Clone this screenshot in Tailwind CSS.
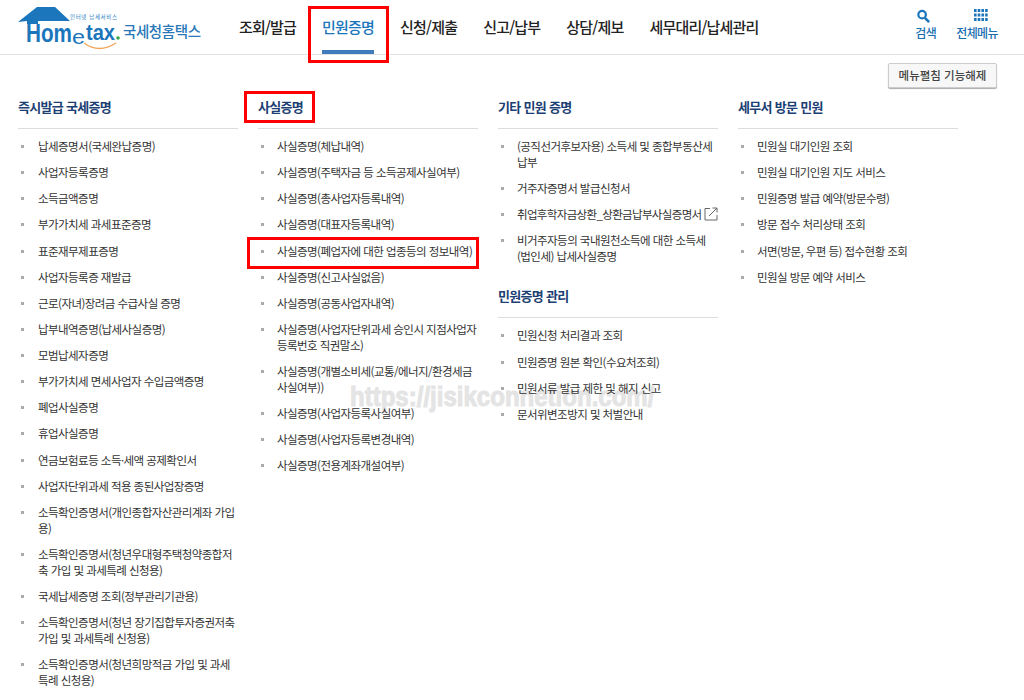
<!doctype html>
<html lang="ko">
<head>
<meta charset="UTF-8" />
<meta name="viewport" content="width=device-width, initial-scale=1.0" />
<script src="https://cdn.jsdelivr.net/npm/@tailwindcss/browser@4"></script>
</head>
<body class="relative h-[700px] overflow-hidden bg-white text-[#333] font-['Noto_Sans_CJK_KR','Noto_Sans',sans-serif]">

<!-- watermark behind the page -->
<div class="absolute -z-10 left-[350px] top-[381px] origin-left scale-x-[0.89] whitespace-nowrap text-[27px] font-bold leading-[32px] text-[#e4e4e4] [-webkit-text-stroke:1px_#e4e4e4] font-['Liberation_Sans',sans-serif]">https://jisikconnetion.com/</div>

<!-- HEADER -->
<header class="flex items-start h-[55px] border-b border-[#e2e2e2]">
    <a href="#" class="block w-[239px] shrink-0">
        <svg width="205" height="54" viewBox="0 0 205 54">
            <path d="M18 22 L37 7 H55 L70 21 H38 V24 H27 V21 Z" fill="#1b76bc"/>
            <text x="70" y="19" font-size="5.5" textLength="47" fill="#2a7fc0">인터넷 납세서비스</text>
            <text x="26" y="42" font-family="Liberation Sans" font-weight="700" font-size="25" textLength="46" lengthAdjust="spacingAndGlyphs" fill="#1b76bc">Hom</text>
            <text x="72" y="44" font-family="Liberation Sans" font-size="20" textLength="13" lengthAdjust="spacingAndGlyphs" fill="#1b76bc">e</text>
            <text x="86" y="40" font-family="Liberation Sans" font-weight="700" font-size="22" textLength="29" lengthAdjust="spacingAndGlyphs" fill="#1b76bc">tax</text>
            <circle cx="118" cy="38" r="1.8" fill="#3aa845"/>
            <path d="M84 43 Q99 54 116 43" stroke="#f2a65a" stroke-width="1.3" fill="none"/>
            <text x="123" y="37" font-size="14.5" font-weight="500" textLength="78" fill="#2878b8">국세청홈택스</text>
        </svg>
    </a>
    <nav class="flex gap-[26px] text-[15px] font-medium tracking-[-0.8px] text-[#222] leading-[54px]">
        <a href="#">조회/발급</a>
        <a href="#" class="relative h-[54px] text-[#1b76bc]">민원증명<span class="absolute left-0 right-0 bottom-0 h-[4px] bg-[#3f7cbc]"></span></a>
        <a href="#">신청/제출</a>
        <a href="#">신고/납부</a>
        <a href="#">상담/제보</a>
        <a href="#">세무대리/납세관리</a>
    </nav>
    <div class="ml-auto flex gap-[20px] pr-[26px] pt-[9px] text-[12px] font-medium tracking-[-0.6px] text-[#1a6fb0] text-center">
        <a href="#" class="flex flex-col items-center">
            <svg width="15" height="15" viewBox="0 0 16 16" class="mr-[5px]"><circle cx="6.5" cy="6" r="4" stroke="#1b76bc" stroke-width="2.4" fill="none"/><path d="M9.5 9.5 L14 14" stroke="#1b76bc" stroke-width="2.8"/></svg>
            <span class="leading-[18px]">검색</span>
        </a>
        <a href="#" class="flex flex-col items-center">
            <svg width="14" height="15" viewBox="0 0 14 15" class="ml-[8px]" fill="#1b76bc">
                <rect x="0" y="0" width="2.6" height="3"/><rect x="3.7" y="0" width="2.6" height="3"/><rect x="7.4" y="0" width="2.6" height="3"/><rect x="11.1" y="0" width="2.6" height="3"/>
                <rect x="0" y="4.5" width="2.6" height="3"/><rect x="3.7" y="4.5" width="2.6" height="3"/><rect x="7.4" y="4.5" width="2.6" height="3"/><rect x="11.1" y="4.5" width="2.6" height="3"/>
                <rect x="0" y="9" width="2.6" height="3"/><rect x="3.7" y="9" width="2.6" height="3"/><rect x="7.4" y="9" width="2.6" height="3"/><rect x="11.1" y="9" width="2.6" height="3"/>
            </svg>
            <span class="leading-[18px]">전체메뉴</span>
        </a>
    </div>
</header>

<div class="flex justify-end pr-[27px] pt-[8px] h-[36px]">
    <button class="w-[109px] h-[25px] bg-[#f7f7f7] border border-[#ccc] rounded-[2px] shadow-[0_1px_1px_#aaa] text-[11.5px] font-medium text-[#444]">메뉴펼침 기능해제</button>
</div>

<!-- MENU COLUMNS -->
<main class="flex gap-[20px] pl-[18px] pt-[6px] text-[11.5px] leading-[16px] tracking-[-0.55px]">

    <section class="w-[220px]">
        <h2 class="h-[32px] border-b border-[#ddd] text-[13px] font-bold leading-[20px] text-[#1c4073] tracking-[-0.7px]">즉시발급 국세증명</h2>
        <ul class="pt-[9px] [&>li]:relative [&>li]:mb-[10.13px] [&>li]:pl-[20px] [&>li]:before:absolute [&>li]:before:left-[3px] [&>li]:before:top-[7px] [&>li]:before:h-[3px] [&>li]:before:w-[3px] [&>li]:before:bg-[#aaa] [&>li]:before:content-['']">
            <li>납세증명서(국세완납증명)</li>
            <li>사업자등록증명</li>
            <li>소득금액증명</li>
            <li>부가가치세 과세표준증명</li>
            <li>표준재무제표증명</li>
            <li>사업자등록증 재발급</li>
            <li>근로(자녀)장려금 수급사실 증명</li>
            <li>납부내역증명(납세사실증명)</li>
            <li>모범납세자증명</li>
            <li>부가가치세 면세사업자 수입금액증명</li>
            <li>폐업사실증명</li>
            <li>휴업사실증명</li>
            <li>연금보험료등 소득·세액 공제확인서</li>
            <li>사업자단위과세 적용 종된사업장증명</li>
            <li>소득확인증명서(개인종합자산관리계좌 가입용)</li>
            <li>소득확인증명서(청년우대형주택청약종합저축 가입 및 과세특례 신청용)</li>
            <li>국세납세증명 조회(정부관리기관용)</li>
            <li>소득확인증명서(청년 장기집합투자증권저축 가입 및 과세특례 신청용)</li>
            <li>소득확인증명서(청년희망적금 가입 및 과세특례 신청용)</li>
        </ul>
    </section>

    <section class="w-[220px]">
        <h2 class="h-[32px] border-b border-[#ddd] text-[13px] font-bold leading-[20px] text-[#1c4073] tracking-[-0.7px]">사실증명</h2>
        <ul class="pt-[9px] [&>li]:relative [&>li]:mb-[10.13px] [&>li]:pl-[19px] [&>li]:before:absolute [&>li]:before:left-[3px] [&>li]:before:top-[7px] [&>li]:before:h-[3px] [&>li]:before:w-[3px] [&>li]:before:bg-[#aaa] [&>li]:before:content-['']">
            <li>사실증명(체납내역)</li>
            <li>사실증명(주택자금 등 소득공제사실여부)</li>
            <li>사실증명(총사업자등록내역)</li>
            <li>사실증명(대표자등록내역)</li>
            <li class="whitespace-nowrap">사실증명(폐업자에 대한 업종등의 정보내역)</li>
            <li>사실증명(신고사실없음)</li>
            <li>사실증명(공동사업자내역)</li>
            <li>사실증명(사업자단위과세 승인시 지점사업자 등록번호 직권말소)</li>
            <li>사실증명(개별소비세(교통/에너지/환경세금 사실여부))</li>
            <li>사실증명(사업자등록사실여부)</li>
            <li>사실증명(사업자등록변경내역)</li>
            <li>사실증명(전용계좌개설여부)</li>
        </ul>
    </section>

    <section class="w-[220px]">
        <h2 class="h-[32px] border-b border-[#ddd] text-[13px] font-bold leading-[20px] text-[#1c4073] tracking-[-0.7px]">기타 민원 증명</h2>
        <ul class="pt-[9px] [&>li]:relative [&>li]:mb-[10.13px] [&>li]:pl-[19px] [&>li]:before:absolute [&>li]:before:left-[3px] [&>li]:before:top-[7px] [&>li]:before:h-[3px] [&>li]:before:w-[3px] [&>li]:before:bg-[#aaa] [&>li]:before:content-['']">
            <li>(공직선거후보자용) 소득세 및 종합부동산세 납부</li>
            <li>거주자증명서 발급신청서</li>
            <li class="whitespace-nowrap tracking-[-0.65px]">취업후학자금상환_상환금납부사실증명서
                <svg width="14" height="14" viewBox="0 0 14 14" class="inline-block align-[-2px]" fill="none" stroke="#666" stroke-width="1"><path d="M6 1.5 H1 V13 H13 V8"/><path d="M5 9 L13 1 M8.5 1 H13 V5.5"/></svg>
            </li>
            <li>비거주자등의 국내원천소득에 대한 소득세 (법인세) 납세사실증명</li>
        </ul>
        <h2 class="mt-[22px] h-[32px] border-b border-[#ddd] text-[13px] font-bold leading-[20px] text-[#1c4073] tracking-[-0.7px]">민원증명 관리</h2>
        <ul class="pt-[9px] [&>li]:relative [&>li]:mb-[10.13px] [&>li]:pl-[19px] [&>li]:before:absolute [&>li]:before:left-[3px] [&>li]:before:top-[7px] [&>li]:before:h-[3px] [&>li]:before:w-[3px] [&>li]:before:bg-[#aaa] [&>li]:before:content-['']">
            <li>민원신청 처리결과 조회</li>
            <li>민원증명 원본 확인(수요처조회)</li>
            <li>민원서류 발급 제한 및 해지 신고</li>
            <li>문서위변조방지 및 처벌안내</li>
        </ul>
    </section>

    <section class="w-[220px]">
        <h2 class="h-[32px] border-b border-[#ddd] text-[13px] font-bold leading-[20px] text-[#1c4073] tracking-[-0.7px]">세무서 방문 민원</h2>
        <ul class="pt-[9px] [&>li]:relative [&>li]:mb-[10.13px] [&>li]:pl-[19px] [&>li]:before:absolute [&>li]:before:left-[3px] [&>li]:before:top-[7px] [&>li]:before:h-[3px] [&>li]:before:w-[3px] [&>li]:before:bg-[#aaa] [&>li]:before:content-['']">
            <li>민원실 대기인원 조회</li>
            <li>민원실 대기인원 지도 서비스</li>
            <li>민원증명 발급 예약(방문수령)</li>
            <li>방문 접수 처리상태 조회</li>
            <li>서면(방문, 우편 등) 접수현황 조회</li>
            <li>민원실 방문 예약 서비스</li>
        </ul>
    </section>
</main>

<!-- red highlight boxes over the page -->
<div class="absolute left-[308px] top-[6px] w-[81px] h-[57px] border-[3px] border-[#f00]"></div>
<div class="absolute left-[244px] top-[91px] w-[71px] h-[32px] border-[3px] border-[#f00]"></div>
<div class="absolute left-[247px] top-[237px] w-[232px] h-[32px] border-[3px] border-[#f00]"></div>

</body>
</html>
